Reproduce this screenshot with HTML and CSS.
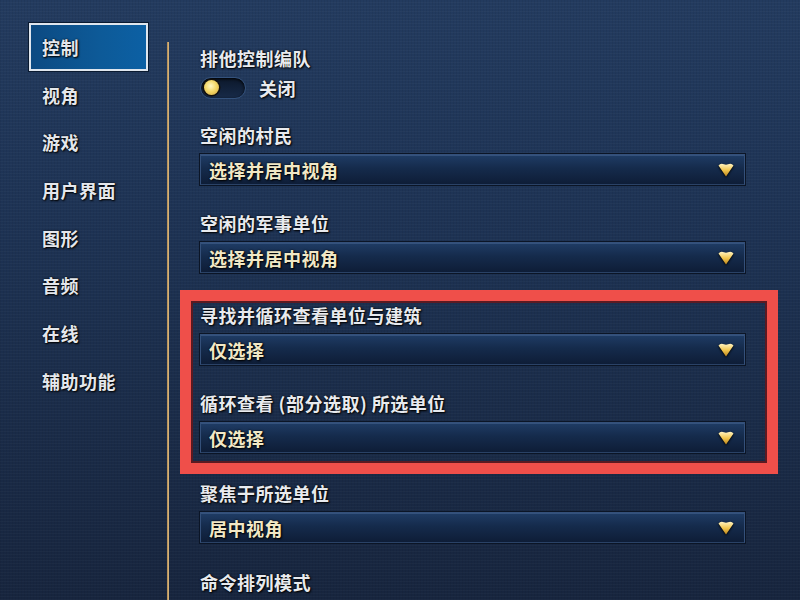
FILE: index.html
```html
<!DOCTYPE html>
<html lang="zh">
<head>
<meta charset="utf-8">
<title>控制</title>
<link rel="stylesheet" href="styles.css">
</head>
<body>
<div class="screen">
  <nav class="sidebar">
    <div class="nav-item active">控制</div>
    <div class="nav-item">视角</div>
    <div class="nav-item">游戏</div>
    <div class="nav-item">用户界面</div>
    <div class="nav-item">图形</div>
    <div class="nav-item">音频</div>
    <div class="nav-item">在线</div>
    <div class="nav-item">辅助功能</div>
  </nav>
  <div class="divider"></div>
  <main class="content">
    <div class="label">排他控制编队</div>
    <div class="toggle-row">
      <div class="toggle"><span class="knob"></span></div>
      <span class="toggle-text">关闭</span>
    </div>

    <div class="label gap-a">空闲的村民</div>
    <div class="dropdown"><span>选择并居中视角</span><svg class="arrow" viewBox="0 0 16 14"><defs><linearGradient id="g1" x1="0" y1="0" x2="0" y2="1"><stop offset="0" stop-color="#fff3c0"/><stop offset="0.5" stop-color="#f2c64e"/><stop offset="1" stop-color="#b9831e"/></linearGradient></defs><path d="M0.5 2.5 Q2.5 0 6 1.3 Q8 2.2 10 1.3 Q13.5 0 15.5 2.5 L8 13.5 Z" fill="url(#g1)"/></svg></div>

    <div class="label gap-b">空闲的军事单位</div>
    <div class="dropdown"><span>选择并居中视角</span><svg class="arrow" viewBox="0 0 16 14"><path d="M0.5 2.5 Q2.5 0 6 1.3 Q8 2.2 10 1.3 Q13.5 0 15.5 2.5 L8 13.5 Z" fill="url(#g1)"/></svg></div>

    <section class="highlight">
      <div class="label">寻找并循环查看单位与建筑</div>
      <div class="dropdown"><span>仅选择</span><svg class="arrow" viewBox="0 0 16 14"><path d="M0.5 2.5 Q2.5 0 6 1.3 Q8 2.2 10 1.3 Q13.5 0 15.5 2.5 L8 13.5 Z" fill="url(#g1)"/></svg></div>
      <div class="label gap-b">循环查看 (部分选取) 所选单位</div>
      <div class="dropdown"><span>仅选择</span><svg class="arrow" viewBox="0 0 16 14"><path d="M0.5 2.5 Q2.5 0 6 1.3 Q8 2.2 10 1.3 Q13.5 0 15.5 2.5 L8 13.5 Z" fill="url(#g1)"/></svg></div>
    </section>

    <div class="label gap-c">聚焦于所选单位</div>
    <div class="dropdown"><span>居中视角</span><svg class="arrow" viewBox="0 0 16 14"><path d="M0.5 2.5 Q2.5 0 6 1.3 Q8 2.2 10 1.3 Q13.5 0 15.5 2.5 L8 13.5 Z" fill="url(#g1)"/></svg></div>

    <div class="label gap-d">命令排列模式</div>
  </main>
</div>
</body>
</html>
```
FILE: styles.css
```css
html, body {
  margin: 0;
  padding: 0;
  background: #1a2b46;
}
.screen {
  width: 800px;
  height: 600px;
  overflow: hidden;
  display: flex;
  font-family: "Noto Sans CJK SC", "Noto Sans", "DejaVu Sans", sans-serif;
  font-weight: 700;
  letter-spacing: 0.5px;
  background:
    repeating-linear-gradient(0deg, rgba(255,255,255,0.025) 0 1px, rgba(0,0,0,0) 1px 3px),
    repeating-linear-gradient(90deg, rgba(0,0,0,0.05) 0 1px, rgba(0,0,0,0) 1px 3px),
    linear-gradient(180deg, #233b5f 0%, #1d3253 40%, #17253e 100%);
}
.sidebar {
  width: 138px;
  flex: none;
  padding: 23px 0 0 29px;
  display: flex;
  flex-direction: column;
}
.nav-item {
  box-sizing: border-box;
  width: 119px;
  height: 47.7px;
  flex: none;
  display: flex;
  align-items: center;
  padding-left: 11px;
  border: 2px solid transparent;
  color: #e4e7ec;
  font-size: 18px;
  text-shadow: 1px 1px 2px #000, 0 0 2px #000;
}
.nav-item.active {
  border-color: #dfe6ee;
  background: linear-gradient(90deg, #0c4a82 0%, #0d5a98 60%, #0c60a4 100%);
  box-shadow: 0 0 0 1px #0a1a30;
}
.divider {
  width: 2px;
  flex: none;
  margin-top: 42px;
  background: linear-gradient(90deg, #a88450, #e2bf83);
}
.content {
  flex: 1;
  padding: 46px 0 0 31px;
  display: flex;
  flex-direction: column;
}
.label {
  height: 24px;
  line-height: 24px;
  font-size: 18px;
  color: #e8eaee;
  white-space: nowrap;
  text-shadow: 1px 1px 2px #000, 0 0 2px #000;
  flex: none;
}
.gap-a { margin-top: 25px; }
.gap-b { margin-top: 26px; }
.gap-c { margin-top: 7px; }
.gap-d { margin-top: 27px; }
.toggle-row {
  margin-top: 7px;
  height: 21px;
  display: flex;
  align-items: center;
  gap: 13px;
}
.toggle {
  box-sizing: border-box;
  width: 46px;
  height: 22px;
  border-radius: 11px;
  background: linear-gradient(180deg, #0c182b, #172a48);
  border: 1px solid #34527c;
  box-shadow: inset 0 1px 3px #000;
  display: flex;
  align-items: center;
  padding-left: 3px;
}
.knob {
  width: 15px;
  height: 15px;
  border-radius: 50%;
  background: radial-gradient(circle at 45% 40%, #fff7c2 0%, #f4d868 45%, #d1a53a 100%);
  box-shadow: 0 0 0 1.5px #14100a;
}
.toggle-text {
  font-size: 18px;
  color: #e8eaee;
  text-shadow: 1px 1px 2px #000, 0 0 2px #000;
}
.dropdown {
  box-sizing: border-box;
  margin-top: 7px;
  width: 545px;
  height: 31px;
  flex: none;
  display: flex;
  align-items: center;
  justify-content: space-between;
  padding: 0 10px 0 8px;
  border: 1px solid #34507a;
  border-bottom-color: #2a4266;
  background: linear-gradient(180deg, #1f3c65 0%, #152b4c 45%, #0e1d37 100%);
  box-shadow: 0 0 0 1px #0b1526, inset 0 1px 0 rgba(120,150,200,0.25);
  font-size: 18px;
  color: #f1e8c6;
  text-shadow: 1px 1px 2px #000, 0 0 2px #000;
}
.arrow {
  width: 16px;
  height: 14px;
  filter: drop-shadow(0 1px 1px #000);
}
.highlight {
  margin: 17px 0 0 -20px;
  box-sizing: border-box;
  width: 598px;
  border: 11px solid #ef4f4a;
  box-shadow: inset 0 0 0 2px #5a1a22;
  padding: 2px 0 10px 9px;
  display: flex;
  flex-direction: column;
}
```
